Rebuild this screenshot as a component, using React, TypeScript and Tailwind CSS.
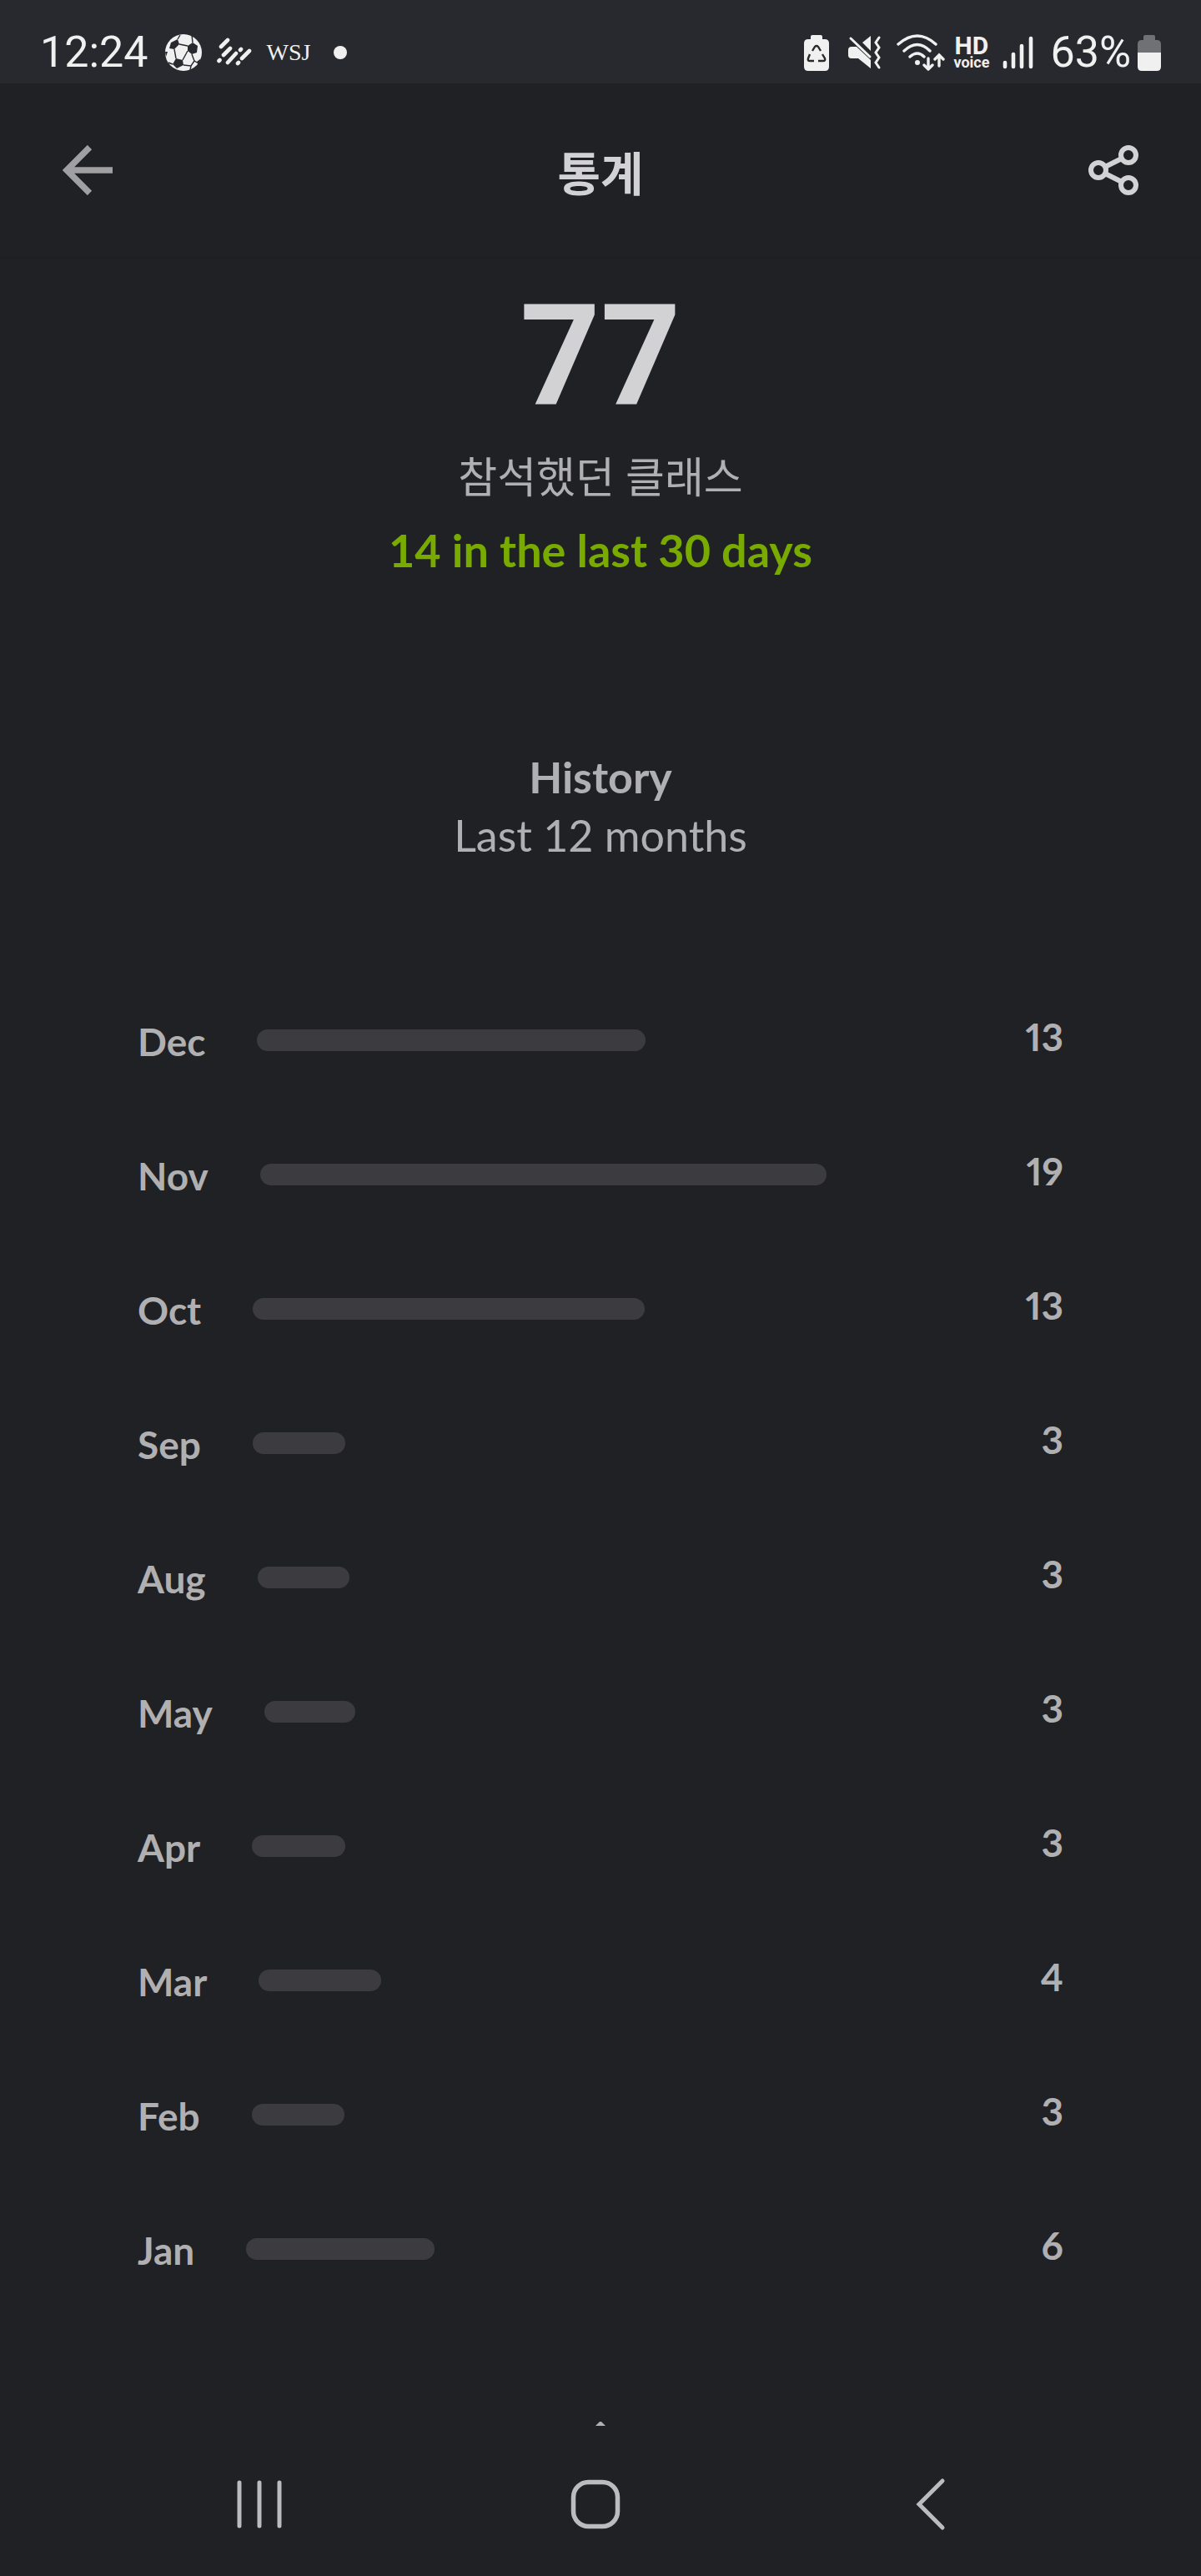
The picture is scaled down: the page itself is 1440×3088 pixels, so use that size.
import type { ReactNode } from "react";

type Month = { label: string; classes: number };

const months: Month[] = [
  { label: "Dec", classes: 13 },
  { label: "Nov", classes: 19 },
  { label: "Oct", classes: 13 },
  { label: "Sep", classes: 3 },
  { label: "Aug", classes: 3 },
  { label: "May", classes: 3 },
  { label: "Apr", classes: 3 },
  { label: "Mar", classes: 4 },
  { label: "Feb", classes: 3 },
  { label: "Jan", classes: 6 },
];

const maxClasses = Math.max(...months.map((m) => m.classes));

const SoccerIcon = () => (
  <svg width="44" height="44" viewBox="0 0 44 44" className="shrink-0">
    <circle cx="22" cy="22" r="22" fill="#f0f0f0" />
    <g fill="#28292e">
      <path d="M7 10 L15 6 L17 12 L11 18 L5 17 Z" />
      <path d="M27 14 L33 10 L39 14 L38 22 L32 24 L27 20 Z" />
      <path d="M13 29 L21 31 L22 37 L14 41 L9 36 Z" />
      <path d="M38 33 L43 29 L40 37 Z" />
      <path d="M0 21 L3 21 L1 27 Z" />
    </g>
    <g stroke="#28292e" strokeWidth="1.4" fill="none">
      <path d="M15 6 L18 1 M17 12 L27 14 M33 10 L32 1 M11 18 L13 29 M21 31 L27 20 M32 24 L35 32 M22 37 L31 38 L35 32 L40 35 M31 38 L30 43 M4 34 L9 36" />
    </g>
  </svg>
);

const StreaksIcon = () => (
  <svg
    width="42"
    height="36"
    viewBox="0 0 42 36"
    stroke="#f0f0f0"
    strokeWidth="4.6"
    strokeLinecap="round"
    className="shrink-0"
  >
    <path d="M5 11 L13 3 M8 21 L16 13 M2.5 28 L3.5 27 M13 30 L23 19 M28 15 L29 14 M30 25 L39 16 M25 31 L26 30" />
  </svg>
);

const BatterySaverIcon = () => (
  <svg width="30" height="43" viewBox="0 0 30 43" className="shrink-0">
    <path
      d="M10 0h10q2 0 2 2v3h3q5 0 5 5v28q0 5-5 5H5q-5 0-5-5V10q0-5 5-5h3V2q0-2 2-2z"
      fill="#f0f0f0"
    />
    <g fill="none" stroke="#28292e" strokeWidth="2.4">
      <path d="M10 19 L13 14 Q15 12 17 14 L20 19" />
      <path d="M7 23 L5 28 Q4 31 7 31 L12 31" />
      <path d="M22 23 L25 28 Q26 31 23 31 L17 31" />
    </g>
  </svg>
);

const MuteVibrateIcon = () => (
  <svg width="40" height="40" viewBox="0 0 40 40" className="shrink-0">
    <g fill="#f0f0f0">
      <path d="M17 8 L27 0 V18 Z" />
      <path d="M0 17q0-4 4-4h6L27 29V39L12 27H4q-4 0-4-4z" />
    </g>
    <g fill="none" stroke="#f0f0f0" strokeWidth="3" strokeLinecap="round">
      <path d="M3 3 L26 25" />
      <path d="M37 2 L33 8 L37 14 L33 20 L37 26 L33 32 L37 38" />
    </g>
  </svg>
);

const WifiIcon = () => (
  <svg
    width="58"
    height="44"
    viewBox="0 0 58 44"
    fill="none"
    stroke="#f0f0f0"
    strokeWidth="3.4"
    strokeLinecap="round"
    className="shrink-0"
  >
    <path d="M2 12 Q25 -8 47 12 M9 20 Q25 5 40 20 M16 27 Q25 19 33 27" />
    <circle cx="25" cy="34" r="3" fill="#f0f0f0" stroke="none" />
    <path d="M38 29 V42 M33 37 L38 42 L43 37 M51 38 V25 M46 30 L51 25 L56 30" />
  </svg>
);

const SignalIcon = () => (
  <svg
    width="37"
    height="40"
    viewBox="0 0 37 40"
    stroke="#f0f0f0"
    strokeWidth="4.6"
    strokeLinecap="round"
    className="shrink-0"
  >
    <path d="M3 32 V37 M13 22 V37 M23 12 V37 M34 3 V37" />
  </svg>
);

const BatteryIcon = () => (
  <svg width="28" height="43" viewBox="0 0 28 43" className="shrink-0">
    <path
      d="M9 0h10q2 0 2 2v4h2q5 0 5 5v10H0V11q0-5 5-5h2V2q0-2 2-2z"
      fill="#707175"
    />
    <path d="M0 21h28v17q0 5-5 5H5q-5 0-5-5z" fill="#f0f0f0" />
  </svg>
);

const StatusBar = () => (
  <div className="flex h-[100px] items-center justify-between bg-[#28292e] pt-[26px] pr-[48px] pl-[48px] text-[52px] leading-[72px] text-[#f0f0f0]">
    <div className="flex items-center font-[Roboto,sans-serif]">
      <span>12:24</span>
      <span className="ml-5 flex items-center gap-[18px]">
        <SoccerIcon />
        <StreaksIcon />
        <span className="font-['Liberation_Serif',serif] text-[28px] leading-none">
          WSJ
        </span>
      </span>
      <span className="ml-[28px] h-4 w-4 rounded-full bg-[#f0f0f0]" />
    </div>
    <div className="flex items-center font-[Roboto,sans-serif]">
      <BatterySaverIcon />
      <span className="ml-[23px] flex">
        <MuteVibrateIcon />
      </span>
      <span className="mr-[10px] ml-[18px] flex">
        <WifiIcon />
      </span>
      <span className="flex flex-col items-center">
        <span className="text-[30px] leading-[24px] font-bold">HD</span>
        <span className="text-[18px] leading-[16px] font-bold">voice</span>
      </span>
      <span className="ml-4 flex">
        <SignalIcon />
      </span>
      <span className="mr-2 ml-5">63%</span>
      <BatteryIcon />
    </div>
  </div>
);

const IconButton = ({
  label,
  children,
}: {
  label: string;
  children: ReactNode;
}) => (
  <button type="button" aria-label={label} className="flex">
    {children}
  </button>
);

const Header = () => (
  <header className="flex h-[210px] items-center justify-between border-b-2 border-[#1e1f23] px-[75px] text-[#d2d2d4]">
    <IconButton label="뒤로">
      <svg
        width="60"
        height="60"
        viewBox="0 0 60 60"
        fill="none"
        stroke="#a0a0a3"
        strokeWidth="7.5"
      >
        <path d="M32.500 2.500 L5 30 L32.500 57.500 M5 30 H60" />
      </svg>
    </IconButton>
    <h1 className="pt-2 text-[56px] leading-[72px] font-bold">통계</h1>
    <IconButton label="공유">
      <svg
        width="60"
        height="60"
        viewBox="0 0 60 60"
        fill="none"
        stroke="currentColor"
        strokeWidth="6"
      >
        <circle cx="12" cy="30" r="9" />
        <circle cx="48" cy="12" r="9" />
        <circle cx="48" cy="48" r="9" />
        <path d="M20 26 L40 16 M20 34 L40 44" />
      </svg>
    </IconButton>
  </header>
);

const Summary = () => (
  <section className="flex flex-col items-center pt-[18px]">
    <p className="font-[Roboto,sans-serif] text-[168px] leading-[200px] font-bold text-[#d2d2d4]">
      77
    </p>
    <p className="mt-2 text-[51px] leading-[72px] text-[#b0b0b2]">
      참석했던 클래스
    </p>
    <p className="mt-4 text-[54px] leading-[72px] font-bold text-[#78aa00]">
      14 in the last 30 days
    </p>
  </section>
);

const HistoryRow = ({ label, classes }: Month) => (
  <li className="flex h-[161px] items-center text-[46px] leading-[60px] font-bold">
    <span className="pt-1">{label}</span>
    <span className="mr-[240px] ml-[62px] flex-1">
      <span
        className="block h-[26px] rounded-full bg-[#3b3b40]"
        style={{ width: `${(classes / maxClasses) * 100}%` }}
      />
    </span>
    <span className="pb-2 proportional-nums">{classes}</span>
  </li>
);

const History = () => (
  <section className="pt-[200px] text-[#b0b0b2]">
    <div className="text-center text-[52px] leading-[70px]">
      <h2 className="font-bold">History</h2>
      <p>Last 12 months</p>
    </div>
    <ul className="mt-[130px] px-[165px]">
      {months.map((month) => (
        <HistoryRow key={month.label} {...month} />
      ))}
    </ul>
    {/* tip of the collapsed panel below the list */}
    <svg
      width="12"
      height="5"
      viewBox="0 0 12 5"
      className="mx-auto mt-[127px]"
      fill="#b0b0b2"
    >
      <path d="M5 0 H7 L12 5 H0 Z" />
    </svg>
  </section>
);

const NavBar = () => (
  <nav className="mt-auto flex h-[172px] items-center justify-between pr-[294px] pl-[281px] text-[#bcbcbe]">
    <IconButton label="최근 앱">
      <svg
        width="60"
        height="60"
        viewBox="0 0 60 60"
        stroke="currentColor"
        strokeWidth="5"
        strokeLinecap="round"
      >
        <path d="M6 4 V56 M30 4 V56 M54 4 V56" />
      </svg>
    </IconButton>
    <IconButton label="홈">
      <svg
        width="60"
        height="60"
        viewBox="0 0 60 60"
        fill="none"
        stroke="currentColor"
        strokeWidth="5.5"
      >
        <rect x="3.500" y="3.500" width="53" height="53" rx="18" />
      </svg>
    </IconButton>
    <IconButton label="이전">
      <svg
        width="60"
        height="64"
        viewBox="0 0 60 64"
        fill="none"
        stroke="currentColor"
        strokeWidth="5"
        strokeLinecap="round"
      >
        <path d="M44 4 L16 32 L44 60" />
      </svg>
    </IconButton>
  </nav>
);

const App = () => {
  return (
    <div className="flex min-h-screen flex-col bg-[#202125] font-[Lato,'Noto_Sans_CJK_KR',sans-serif]">
      <StatusBar />
      <Header />
      <main>
        <Summary />
        <History />
      </main>
      <NavBar />
    </div>
  );
};

export default App;
